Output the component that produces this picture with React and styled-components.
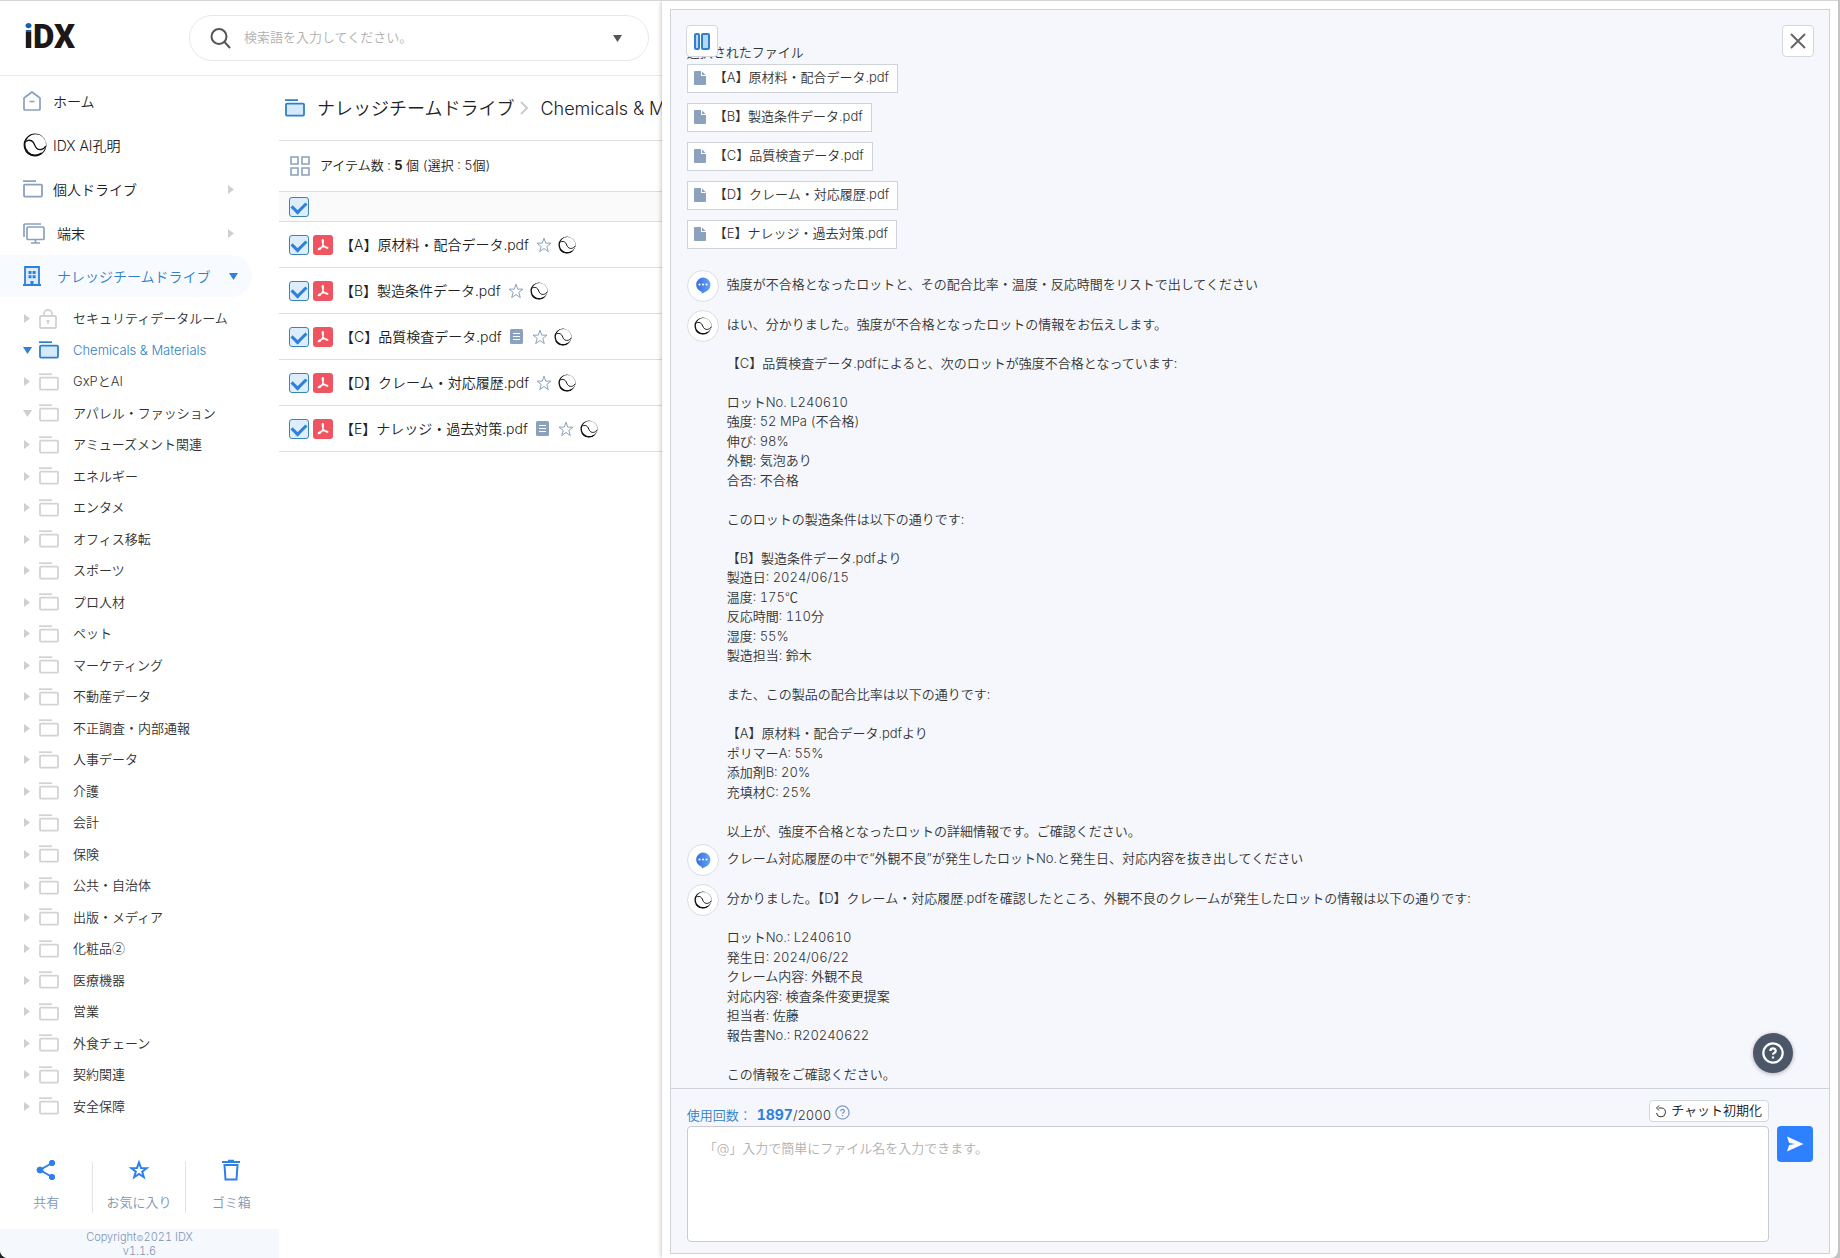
import React, { useState } from "react";
import styled, { createGlobalStyle } from "styled-components";

const treeItems = [
  { name: "セキュリティデータルーム", type: "lock" },
  { name: "Chemicals & Materials", open: true, active: true },
  { name: "GxPとAI" },
  { name: "アパレル・ファッション", open: true },
  { name: "アミューズメント関連" },
  { name: "エネルギー" },
  { name: "エンタメ" },
  { name: "オフィス移転" },
  { name: "スポーツ" },
  { name: "プロ人材" },
  { name: "ペット" },
  { name: "マーケティング" },
  { name: "不動産データ" },
  { name: "不正調査・内部通報" },
  { name: "人事データ" },
  { name: "介護" },
  { name: "会計" },
  { name: "保険" },
  { name: "公共・自治体" },
  { name: "出版・メディア" },
  { name: "化粧品②" },
  { name: "医療機器" },
  { name: "営業" },
  { name: "外食チェーン" },
  { name: "契約関連" },
  { name: "安全保障" },
];

const files = [
  { id: "a", name: "【A】原材料・配合データ.pdf" },
  { id: "b", name: "【B】製造条件データ.pdf" },
  { id: "c", name: "【C】品質検査データ.pdf", memo: true },
  { id: "d", name: "【D】クレーム・対応履歴.pdf" },
  { id: "e", name: "【E】ナレッジ・過去対策.pdf", memo: true },
];

const messages = [
  {
    from: "user",
    text: "強度が不合格となったロットと、その配合比率・温度・反応時間をリストで出してください",
  },
  {
    from: "ai",
    text: `はい、分かりました。強度が不合格となったロットの情報をお伝えします。

【C】品質検査データ.pdfによると、次のロットが強度不合格となっています:

ロットNo. L240610
強度: 52 MPa (不合格)
伸び: 98%
外観: 気泡あり
合否: 不合格

このロットの製造条件は以下の通りです:

【B】製造条件データ.pdfより
製造日: 2024/06/15
温度: 175℃
反応時間: 110分
湿度: 55%
製造担当: 鈴木

また、この製品の配合比率は以下の通りです:

【A】原材料・配合データ.pdfより
ポリマーA: 55%
添加剤B: 20%
充填材C: 25%

以上が、強度不合格となったロットの詳細情報です。ご確認ください。`,
  },
  {
    from: "user",
    text: "クレーム対応履歴の中で“外観不良”が発生したロットNo.と発生日、対応内容を抜き出してください",
  },
  {
    from: "ai",
    text: `分かりました。【D】クレーム・対応履歴.pdfを確認したところ、外観不良のクレームが発生したロットの情報は以下の通りです:

ロットNo.: L240610
発生日: 2024/06/22
クレーム内容: 外観不良
対応内容: 検査条件変更提案
担当者: 佐藤
報告書No.: R20240622

この情報をご確認ください。`,
  },
];

// ℃ and ② should keep the full width of the Japanese font
const withWideSymbols = (text) =>
  text.split(/([℃②])/).map((part, index) => (index % 2 ? <StWideSymbol key={index}>{part}</StWideSymbol> : part));

/* -------------- Icons -------------- */
const SwirlIcon = ({ size }) => (
  <svg width={size} height={size} viewBox="0 0 24 24" aria-hidden="true">
    <path
      fillRule="evenodd"
      fill="#111"
      d="M12 .6a11.4 11.4 0 1 0 0 22.800 11.4 11.4 0 0 0 0-22.800zM12.700 1.200a10.300 10.300 0 1 1 0 20.600 10.300 10.300 0 0 1 0-20.600z"
    />
    <path
      fill="none"
      stroke="#111"
      strokeWidth="1.3"
      d="M1.200 9.600C3 7 7.800 6.200 10 9c1.600 2 1.700 4.400 3.600 6.200 2.600 2.300 6.800 1.800 9.200-2"
    />
    <path fill="none" stroke="#111" strokeWidth="1.4" d="M2.400 17c2 3.600 5.600 5.500 9.400 5.400 2.700 0 4.800-.8 6.700-2.300" />
  </svg>
);

const FolderIcon = ({ color, fill = "none" }) => (
  <svg width="20" height="18" viewBox="0 0 20 18" aria-hidden="true">
    <path d="M0 1.2h13" stroke={color} strokeWidth="1.8" />
    <rect x="1" y="4.6" width="18" height="12" rx="1" fill={fill} stroke={color} strokeWidth="1.8" />
  </svg>
);

const LockIcon = () => (
  <svg width="18" height="20" viewBox="0 0 18 20" fill="none" stroke="#d3d3d3" strokeWidth="1.8" aria-hidden="true">
    <rect x="1" y="7" width="16" height="12" rx="1" />
    <path d="M5 7V5a4 4 0 0 1 8 0v2" />
    <path d="M9 11v4M7.5 12h3" />
  </svg>
);

const HomeIcon = () => (
  <svg width="18" height="20" viewBox="0 0 18 20" fill="none" stroke="#8ba1bd" strokeWidth="1.7" aria-hidden="true">
    <path d="M1 7l8-6 8 6v11a1 1 0 0 1-1 1H2a1 1 0 0 1-1-1z" strokeLinejoin="round" />
    <path d="M6.5 10.500h5" />
  </svg>
);

const DeviceIcon = () => (
  <svg width="22" height="21" viewBox="0 0 22 21" fill="none" stroke="#8ba1bd" strokeWidth="1.7" aria-hidden="true">
    <path d="M1 14V2a1 1 0 0 1 1-1h16" />
    <rect x="4" y="4" width="17" height="12.5" rx="1" />
    <path d="M12.5 16.500v3M8 20h9" />
  </svg>
);

const BuildingIcon = () => (
  <svg width="18" height="20" viewBox="0 0 18 20" fill="none" aria-hidden="true">
    <path d="M2 19V1h14v18" fill="#dcecfc" stroke="#2f80d8" strokeWidth="1.8" />
    <path d="M0 19h18" stroke="#2f80d8" strokeWidth="2" />
    <path d="M5.5 5h3v3h-3zM9.6 5h3v3h-3zM5.5 9.200h3v3h-3zM9.6 9.200h3v3h-3zM7.500 15h3v4h-3z" fill="#2f80d8" />
  </svg>
);

const Arrow = ({ open, color = "#cfcfcf" }) => (
  <svg width="9" height="9" viewBox="0 0 9 9" fill={color} aria-hidden="true">
    <path d={open ? "M0 1h9L4.500 8z" : "M1 0l6 4.500L1 9z"} />
  </svg>
);

const StarIcon = ({ size, color, width = 1 }) => (
  <svg width={size} height={size} viewBox="0 0 16 16" fill="none" stroke={color} strokeWidth={width} aria-hidden="true">
    <path d="M8 1.200l1.700 4.900 5.300.1-4.200 3.200 1.500 5.200L8 11.500l-4.300 3.100 1.500-5.200L1 6.200l5.300-.1z" />
  </svg>
);

const PdfIcon = () => (
  <svg width="20" height="20" viewBox="0 0 20 20" aria-hidden="true">
    <rect width="20" height="20" rx="3" fill="#ee5560" />
    <path
      d="M9.800 4.500c1.200 0 .5 3 .3 4.400-.5 2.400-2.800 6-4.500 5.800-1.500-.3 1.700-2.400 4.700-2.800 2.400-.3 4.800.2 4.500 1.100-.5 1-3.700-1.100-4.700-3.200-.6-1.800-1.500-5.300-.3-5.300z"
      fill="#fff"
      stroke="#fff"
      strokeWidth="1.2"
    />
  </svg>
);

const MemoIcon = () => (
  <svg width="13" height="15" viewBox="0 0 13 15" aria-hidden="true">
    <rect width="13" height="15" rx="1.5" fill="#8ba1bd" />
    <path d="M3 4.500h7M3 7.500h7M3 10.500h7" stroke="#fff" />
  </svg>
);

const DocIcon = () => (
  <svg width="12" height="14" viewBox="0 0 12 14" aria-hidden="true">
    <path d="M1 0h6v5h5v8a1 1 0 0 1-1 1H1a1 1 0 0 1-1-1V1a1 1 0 0 1 1-1z" fill="#8ba1bd" />
    <path d="M8 .5L11.600 4H8z" fill="#8ba1bd" />
  </svg>
);

const BubbleIcon = () => (
  <svg width="16" height="17" viewBox="0 0 16 17" aria-hidden="true">
    <defs>
      <linearGradient id="bubble" x1="0" x2="1">
        <stop offset="0" stopColor="#3c6be0" />
        <stop offset="1" stopColor="#5fa5f5" />
      </linearGradient>
    </defs>
    <path d="M8 .5a7.300 7.300 0 0 1 2.500 14.200L7 16.600l-.5-1.800A7.300 7.300 0 0 1 8 .5z" fill="url(#bubble)" />
    <g fill="#fff">
      <circle cx="4.5" cy="7.5" r="1.1" />
      <circle cx="8" cy="7.5" r="1.1" />
      <circle cx="11.5" cy="7.5" r="1.1" />
    </g>
  </svg>
);

const QuestionIcon = ({ size, color, width }) => (
  <svg width={size} height={size} viewBox="0 0 20 20" fill="none" stroke={color} strokeWidth={width} aria-hidden="true">
    <circle cx="10" cy="10" r="8.8" />
    <path d="M7.600 8.200c0-3.200 4.900-3.200 4.900 0 0 1.700-2.500 1.700-2.500 3.400M10 13.200v1.900" />
  </svg>
);

const App = () => {
  const [checked, setChecked] = useState(files.map((file) => file.id));
  const [text, setText] = useState("");

  const toggleAll = () => {
    setChecked(checked.length === files.length ? [] : files.map((file) => file.id));
  };

  const toggleFile = (id) => {
    setChecked(checked.includes(id) ? checked.filter((item) => item !== id) : [...checked, id]);
  };

  return (
    <>
      <GlobalStyle />
      <StApp>
        {/* -------------- Drive -------------- */}
        <StDrive>
          <StHeader>
            <StLogo href="#">
              <StLogoMark>i</StLogoMark>DX
            </StLogo>
            <StSearch>
              <svg width="21" height="21" viewBox="0 0 21 21" fill="none" stroke="#555" strokeWidth="2" aria-hidden="true">
                <circle cx="9" cy="8.5" r="7.5" />
                <path d="M14.500 14l5.500 6" />
              </svg>
              <StSearchInput aria-label="検索" placeholder="検索語を入力してください。" />
              <StPlainButton aria-label="検索オプション">
                <Arrow open color="#555" />
              </StPlainButton>
            </StSearch>
          </StHeader>

          <StDriveBody>
            <StSidebar>
              <StNav>
                <StNavItem href="#" $gap={12}>
                  <HomeIcon />
                  ホーム
                </StNavItem>
                <StNavItem href="#" $gap={6}>
                  <SwirlIcon size={24} />
                  IDX AI孔明
                </StNavItem>
                <StNavItem href="#" $gap={10}>
                  <FolderIcon color="#8ba1bd" />
                  <StNavLabel>個人ドライブ</StNavLabel>
                  <Arrow />
                </StNavItem>
                <StNavItem href="#" $gap={12}>
                  <DeviceIcon />
                  <StNavLabel>端末</StNavLabel>
                  <Arrow />
                </StNavItem>
                <StNavItem href="#" $gap={16} $active>
                  <BuildingIcon />
                  <StNavLabel>ナレッジチームドライブ</StNavLabel>
                  <Arrow open color="#2f80d8" />
                </StNavItem>
              </StNav>

              <StTree>
                {treeItems.map((item) => (
                  <li key={item.name}>
                    <StTreeLink href="#" $active={item.active}>
                      <Arrow open={item.open} color={item.active ? "#2f80d8" : "#cfcfcf"} />
                      <StTreeIcon>
                        {item.type === "lock" ? (
                          <LockIcon />
                        ) : (
                          <FolderIcon
                            color={item.active ? "#2f80c8" : "#d3d3d3"}
                            fill={item.active ? "#d5e9fc" : "none"}
                          />
                        )}
                      </StTreeIcon>
                      <span>{withWideSymbols(item.name)}</span>
                    </StTreeLink>
                  </li>
                ))}
              </StTree>

              <StShortcuts>
                <StShortcut>
                  <svg width="20" height="22" viewBox="0 0 20 22" fill="#2f80e8" stroke="#2f80e8" aria-hidden="true">
                    <path d="M16 4L4 11l12 7" fill="none" strokeWidth="2" />
                    <circle cx="4" cy="11" r="3" />
                    <circle cx="16" cy="4" r="2.7" />
                    <circle cx="16" cy="18" r="2.7" />
                  </svg>
                  共有
                </StShortcut>
                <StShortcut>
                  <svg width="22" height="22" viewBox="0 0 22 22" fill="none" stroke="#2f80e8" strokeWidth="2" aria-hidden="true">
                    <path d="M11 3.500l2 5.400 5.700.2-4.500 3.500 1.600 5.600-4.800-3.300-4.800 3.300 1.600-5.600-4.500-3.500 5.700-.2z" />
                  </svg>
                  お気に入り
                </StShortcut>
                <StShortcut>
                  <svg width="20" height="22" viewBox="0 0 20 22" fill="none" stroke="#2f80e8" strokeWidth="2" aria-hidden="true">
                    <path d="M1 3h18M7 1.800h6M3.500 6h13l-1 14.500h-11z" />
                  </svg>
                  ゴミ箱
                </StShortcut>
              </StShortcuts>
              <StCopyright>
                Copyright<small>©</small>2021 IDX
                <br />
                v1.1.6
              </StCopyright>
            </StSidebar>

            {/* -------------- File List -------------- */}
            <StFilePane>
              <StBreadcrumb>
                <FolderIcon color="#2f80c0" fill="#d5e9fc" />
                <StCrumb href="#">ナレッジチームドライブ</StCrumb>
                <svg width="8" height="14" viewBox="0 0 8 14" fill="none" stroke="#ccc" strokeWidth="2" aria-hidden="true">
                  <path d="M1 1l6 6-6 6" />
                </svg>
                <StCrumb href="#">Chemicals &amp; Materials</StCrumb>
              </StBreadcrumb>
              <StToolbar>
                <StPlainButton aria-label="表示切替">
                  <svg width="20" height="20" viewBox="0 0 20 20" fill="none" stroke="#8ba1bd" strokeWidth="1.6" aria-hidden="true">
                    <path d="M1 1h7v7H1zM12 1h7v7h-7zM1 12h7v7H1zM12 12h7v7h-7z" />
                  </svg>
                </StPlainButton>
                <span>
                  アイテム数 : <b>{files.length}</b> 個 (選択 : {checked.length}個)
                </span>
              </StToolbar>
              <StCheckAll>
                <StCheckbox
                  type="checkbox"
                  aria-label="すべて選択"
                  checked={checked.length === files.length}
                  onChange={toggleAll}
                />
              </StCheckAll>
              <StFileList>
                {files.map((file) => (
                  <StFileRow key={file.id}>
                    <StCheckbox
                      type="checkbox"
                      id={`file-${file.id}`}
                      checked={checked.includes(file.id)}
                      onChange={() => toggleFile(file.id)}
                    />
                    <PdfIcon />
                    <StFileName htmlFor={`file-${file.id}`}>{file.name}</StFileName>
                    {file.memo && (
                      <StFileMemo>
                        <MemoIcon />
                      </StFileMemo>
                    )}
                    <StFileMarks>
                      <StarIcon size={16} color="#8ba1bd" />
                      <SwirlIcon size={18} />
                    </StFileMarks>
                  </StFileRow>
                ))}
              </StFileList>
            </StFilePane>
          </StDriveBody>
        </StDrive>

        {/* -------------- Chat -------------- */}
        <StChatWrap>
          <StChat>
            <StPaneButton aria-label="パネル切替">
              <svg width="16" height="17" viewBox="0 0 16 17" fill="#b5d8f8" stroke="#2f80d0" strokeWidth="2" aria-hidden="true">
                <rect x="1" y="1" width="4" height="15" rx="1" />
                <rect x="8" y="1" width="7" height="15" rx="1" />
              </svg>
            </StPaneButton>
            <StCloseButton aria-label="閉じる">
              <svg width="16" height="16" viewBox="0 0 16 16" stroke="#666" strokeWidth="2" aria-hidden="true">
                <path d="M1 1l14 14M15 1L1 15" />
              </svg>
            </StCloseButton>

            <StLog>
              <div>選択されたファイル</div>
              <StChips>
                {files.map((file) => (
                  <StChip key={file.id}>
                    <DocIcon />
                    {file.name}
                  </StChip>
                ))}
              </StChips>
              {messages.map((message, index) => (
                <StMessage key={index}>
                  <StAvatar>{message.from === "user" ? <BubbleIcon /> : <SwirlIcon size={18} />}</StAvatar>
                  <StMessageText>{withWideSymbols(message.text)}</StMessageText>
                </StMessage>
              ))}
              <StHelpButton aria-label="ヘルプ">
                <QuestionIcon size={22} color="#fff" width={2} />
              </StHelpButton>
            </StLog>

            <StComposer>
              <StComposerMain>
                <StUsage>
                  <StUsageText>
                    <StUsageLabel htmlFor="prompt">使用回数：</StUsageLabel>
                    <StUsageCount>1897</StUsageCount>/2000
                  </StUsageText>
                  <QuestionIcon size={15} color="#7d9bc8" width={1.7} />
                  <StResetButton>
                    <svg width="12" height="13" viewBox="0 0 12 13" fill="none" stroke="#333" aria-hidden="true">
                      <path d="M3.500 3H7a4.500 4.500 0 1 1-5.500 5M4 .5L1.500 3 4 5.500" />
                    </svg>
                    チャット初期化
                  </StResetButton>
                </StUsage>
                <StPrompt
                  id="prompt"
                  value={text}
                  onChange={(e) => setText(e.target.value)}
                  placeholder="「@」入力で簡単にファイル名を入力できます。"
                />
              </StComposerMain>
              <StSendButton aria-label="送信">
                <svg width="18" height="16" viewBox="0 0 18 16" fill="#fff" aria-hidden="true">
                  <path d="M1 .5L17.500 8 1 15.500 3.200 9l6-1-6-1z" />
                </svg>
              </StSendButton>
            </StComposer>
          </StChat>
        </StChatWrap>
      </StApp>
    </>
  );
};

export default App;

const GlobalStyle = createGlobalStyle`
  * {
    box-sizing: border-box;
  }

  body {
    margin: 0;
    background: linear-gradient(to right, #222 50%, #c4c4c4 50%);
    color: #333;
    font-family: Inter, "Noto Sans CJK JP", sans-serif;
    font-size: 13px;
    font-variant-numeric: tabular-nums;
    font-weight: 350;
    line-height: 1.5;
  }

  a {
    color: inherit;
    text-decoration: none;
  }

  ul {
    margin: 0;
    padding: 0;
    list-style: none;
  }

  button,
  input,
  textarea {
    margin: 0;
    font: inherit;
  }

  svg {
    display: block;
    flex-shrink: 0;
  }
`;

const StApp = styled.div`
  display: grid;
  grid-template-columns: 9fr 16fr;
  height: 100vh;
  margin-right: 2px;
  overflow: hidden;
  background-color: #fff;
  border-top: 1px solid #d5d5d5;
  border-radius: 0 0 8px 8px;
`;

const StWideSymbol = styled.span`
  font-family: "Noto Sans CJK JP", sans-serif;
  line-height: 1;
`;

const StDrive = styled.div`
  display: flex;
  flex-direction: column;
  min-width: 0;
  overflow: hidden;
`;

const StHeader = styled.header`
  display: flex;
  align-items: flex-start;
  gap: 12px;
  height: 75px;
  padding: 14px 13px 0 24px;
  border-bottom: 1px solid #ebebeb;
`;

const StLogo = styled.a`
  flex: 0 0 153px;
  color: #1d1717;
  font-family: Roboto, sans-serif;
  font-size: 33px;
  font-weight: 900;
  line-height: 44px;
`;

const StLogoMark = styled.span`
  background: linear-gradient(#1c5fa8 38%, #1d1717 38%);
  background-clip: text;
  color: transparent;
`;

const StSearch = styled.div`
  display: flex;
  flex: 1;
  align-items: center;
  gap: 13px;
  height: 46px;
  padding: 0 26px 0 20px;
  border: 1px solid #e4e9ea;
  border-radius: 23px;
`;

const StSearchInput = styled.input`
  flex: 1;
  min-width: 0;
  padding: 0;
  border: 0;
  outline: 0;

  &::placeholder {
    color: #b0b0b0;
  }
`;

const StPlainButton = styled.button`
  padding: 0;
  border: 0;
  background: none;
  cursor: pointer;
`;

const StDriveBody = styled.div`
  display: flex;
  flex: 1;
  min-height: 0;
`;

const StSidebar = styled.aside`
  display: flex;
  flex: 0 0 279px;
  flex-direction: column;
`;

const StNav = styled.nav`
  padding: 3px 27px 0 0;
`;

const StNavItem = styled.a`
  display: flex;
  align-items: center;
  gap: ${({ $gap }) => $gap}px;
  height: ${({ $active }) => ($active ? "42px" : "44px")};
  padding: 0 ${({ $active }) => ($active ? "14px" : "16px")} 0 23px;
  border-radius: 0 21px 21px 0;
  background-color: ${({ $active }) => ($active ? "#f7fbff" : "transparent")};
  color: ${({ $active }) => ($active ? "#2f80c8" : "#222")};
  font-size: 14px;
`;

const StNavLabel = styled.span`
  flex: 1;
  white-space: nowrap;
`;

const StTree = styled.ul`
  flex: 1;
  min-height: 0;
  padding: 6px 0 0 23px;
  overflow: hidden;
`;

const StTreeLink = styled.a`
  display: flex;
  align-items: center;
  gap: 7px;
  padding: 6px 0;
  color: ${({ $active }) => ($active ? "#2f80c8" : "#333")};
`;

const StTreeIcon = styled.span`
  display: flex;
  flex: 0 0 27px;
  align-items: center;
  height: 18px;
`;

const StShortcuts = styled.div`
  display: grid;
  grid-template-columns: repeat(3, 1fr);
  height: 41px;
  margin: 0 2px 26px 0;
`;

const StShortcut = styled.button`
  display: flex;
  flex-direction: column;
  align-items: center;
  gap: 12px;
  padding: 0;
  border: 0;
  background: none;
  color: #7d96b4;
  white-space: nowrap;
  cursor: pointer;

  & + & {
    border-left: 1px solid #e3e3e3;
  }

  svg {
    margin-top: -3px;
  }
`;

const StCopyright = styled.footer`
  padding-top: 1px;
  background-color: #f5f8fd;
  color: #7d96b4;
  font-size: 11px;
  line-height: 14px;
  text-align: center;

  small {
    font-size: 8px;
    line-height: 1;
  }
`;

const StFilePane = styled.main`
  flex: 1;
  min-width: 0;
  overflow: hidden;
`;

const StBreadcrumb = styled.div`
  display: flex;
  align-items: center;
  gap: 6px;
  height: 65px;
  padding: 0 0 0 6px;
  border-bottom: 1px solid #ddd;
  color: #222;
  font-size: 18px;
  white-space: nowrap;
`;

const StCrumb = styled.a`
  padding-left: 6px;
`;

const StToolbar = styled.div`
  display: flex;
  align-items: center;
  gap: 10px;
  height: 51px;
  padding-left: 11px;
  border-bottom: 1px solid #ddd;
  color: #222;
  white-space: nowrap;
`;

const StCheckAll = styled.div`
  display: flex;
  align-items: center;
  height: 30px;
  padding-left: 10px;
  border-bottom: 1px solid #ddd;
  background-color: #fafafa;
`;

const StCheckbox = styled.input`
  display: grid;
  flex-shrink: 0;
  place-items: center;
  width: 20px;
  height: 20px;
  appearance: none;
  border: 1px solid #3c83b8;
  border-radius: 3px;
  background-color: #dcedfd;
  cursor: pointer;

  &:checked::before {
    content: "";
    width: 11px;
    height: 7px;
    margin-bottom: 2px;
    border: solid #2f80d8;
    border-width: 0 0 3px 3px;
    transform: rotate(-45deg);
  }
`;

const StFileList = styled.ul`
  white-space: nowrap;
`;

const StFileRow = styled.li`
  display: flex;
  align-items: center;
  gap: 4px;
  height: 46px;
  padding-left: 10px;
  border-bottom: 1px solid #ddd;
`;

const StFileName = styled.label`
  padding-left: 3px;
  color: #222;
  font-size: 14px;
`;

const StFileMemo = styled.span`
  padding: 0 2px 0 4px;
`;

const StFileMarks = styled.span`
  display: flex;
  align-items: center;
  gap: 6px;
  padding-left: 3px;
`;

const StChatWrap = styled.div`
  display: flex;
  min-width: 0;
  min-height: 0;
  padding: 8px 8px 4px;
  background-color: #fff;
  box-shadow: 0 0 5px rgba(0, 0, 0, 0.3);
`;

const StChat = styled.section`
  position: relative;
  display: flex;
  flex: 1;
  flex-direction: column;
  min-width: 0;
  border: 1px solid #ced3da;
  background-color: #f5f7fc;
`;

const StFloatButton = styled.button`
  position: absolute;
  top: 15px;
  display: grid;
  place-items: center;
  width: 32px;
  height: 32px;
  padding: 0;
  border: 1px solid #d3d8df;
  border-radius: 4px;
  background-color: #fff;
  cursor: pointer;
`;

const StPaneButton = styled(StFloatButton)`
  left: 15px;
`;

const StCloseButton = styled(StFloatButton)`
  right: 15px;
`;

const StLog = styled.div`
  flex: 1;
  min-height: 0;
  padding: 33px 16px 0;
  overflow-y: auto;
`;

const StChips = styled.ul`
  display: flex;
  flex-direction: column;
  align-items: flex-start;
  gap: 10px;
  padding: 1px 0 21px;
`;

const StChip = styled.li`
  display: flex;
  align-items: center;
  gap: 8px;
  height: 29px;
  padding: 0 8px 0 6px;
  border: 1px solid #ced3da;
  background-color: #fff;
`;

const StMessage = styled.div`
  display: flex;
  align-items: flex-start;
  gap: 8px;
  min-height: 40px;
`;

const StAvatar = styled.span`
  display: grid;
  flex: 0 0 32px;
  place-items: center;
  height: 32px;
  border: 1px solid #dadee3;
  border-radius: 50%;
  background-color: #fff;
`;

const StMessageText = styled.div`
  padding: 5px 0 3px;
  white-space: pre-wrap;
`;

const StHelpButton = styled.button`
  position: absolute;
  right: 36px;
  bottom: 180px;
  display: grid;
  place-items: center;
  width: 40px;
  height: 40px;
  padding: 0;
  border: 0;
  border-radius: 50%;
  background-color: #4b5768;
  box-shadow: 0 1px 4px rgba(0, 0, 0, 0.3);
  cursor: pointer;
`;

const StComposer = styled.div`
  display: flex;
  align-items: flex-start;
  gap: 8px;
  padding: 11px 16px 11px;
  border-top: 1px solid #ced3da;
`;

const StComposerMain = styled.div`
  flex: 1;
  min-width: 0;
`;

const StUsage = styled.div`
  display: flex;
  align-items: flex-start;
  height: 26px;

  > svg {
    margin: 5px auto 0 4px;
  }
`;

const StUsageText = styled.span`
  padding-top: 4px;
`;

const StUsageLabel = styled.label`
  margin-right: 5px;
  color: #2f80c8;
`;

const StUsageCount = styled.b`
  color: #2f80d8;
  font-size: 14px;
`;

const StResetButton = styled.button`
  display: flex;
  align-items: center;
  gap: 4px;
  height: 22px;
  padding: 0 6px 0 5px;
  border: 1px solid #d3d8df;
  border-radius: 4px;
  background-color: #fff;
  color: #111;
  cursor: pointer;
`;

const StPrompt = styled.textarea`
  display: block;
  width: 100%;
  height: 116px;
  padding: 12px 16px;
  border: 1px solid #c8ccd2;
  border-radius: 4px;
  outline: 0;
  background-color: #fff;
  resize: none;

  &::placeholder {
    color: #b0b0b0;
  }
`;

const StSendButton = styled.button`
  display: grid;
  place-items: center;
  width: 36px;
  height: 36px;
  margin-top: 26px;
  padding: 0;
  border: 0;
  border-radius: 4px;
  background-color: #2f80ff;
  cursor: pointer;
`;
